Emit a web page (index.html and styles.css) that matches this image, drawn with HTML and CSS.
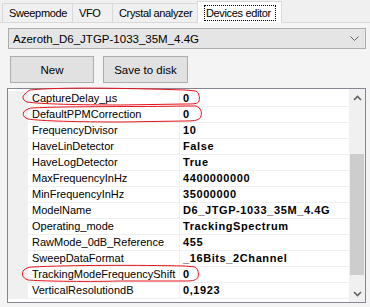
FILE: index.html
```html
<!DOCTYPE html>
<html>
<head>
<meta charset="utf-8">
<link rel="stylesheet" href="styles.css">
</head>
<body>
<div class="window">
  <div class="tabs">
    <div class="tab t1">Sweepmode</div>
    <div class="tab t2">VFO</div>
    <div class="tab t3">Crystal analyzer</div>
    <div class="tab active t4"><span class="focus">Devices editor</span></div>
  </div>
  <div class="page">
    <div class="combo">
      <span class="combo-text">Azeroth_D6_JTGP-1033_35M_4.4G</span>
      <svg class="combo-arrow" width="9" height="5" viewBox="0 0 9 5"><path d="M0.5 0.5 L4.5 4.5 L8.5 0.5" fill="none" stroke="#606060" stroke-width="1"/></svg>
    </div>
    <div class="buttons">
      <button class="btn b-new">New</button>
      <button class="btn b-save">Save to disk</button>
    </div>
    <div class="grid">
      <div class="rows">
        <div class="row"><div class="gutter"></div><div class="name">CaptureDelay_µs</div><div class="val">0</div></div>
        <div class="row"><div class="gutter"></div><div class="name">DefaultPPMCorrection</div><div class="val">0</div></div>
        <div class="row"><div class="gutter"></div><div class="name">FrequencyDivisor</div><div class="val">10</div></div>
        <div class="row"><div class="gutter"></div><div class="name">HaveLinDetector</div><div class="val">False</div></div>
        <div class="row"><div class="gutter"></div><div class="name">HaveLogDetector</div><div class="val">True</div></div>
        <div class="row"><div class="gutter"></div><div class="name">MaxFrequencyInHz</div><div class="val">4400000000</div></div>
        <div class="row"><div class="gutter"></div><div class="name">MinFrequencyInHz</div><div class="val">35000000</div></div>
        <div class="row"><div class="gutter"></div><div class="name">ModelName</div><div class="val">D6_JTGP-1033_35M_4.4G</div></div>
        <div class="row"><div class="gutter"></div><div class="name">Operating_mode</div><div class="val">TrackingSpectrum</div></div>
        <div class="row"><div class="gutter"></div><div class="name">RawMode_0dB_Reference</div><div class="val">455</div></div>
        <div class="row"><div class="gutter"></div><div class="name">SweepDataFormat</div><div class="val">_16Bits_2Channel</div></div>
        <div class="row"><div class="gutter"></div><div class="name">TrackingModeFrequencyShift</div><div class="val">0</div></div>
        <div class="row"><div class="gutter"></div><div class="name">VerticalResolutiondB</div><div class="val">0,1923</div></div>
      </div>
      <div class="scrollbar">
        <div class="sb-btn"><svg width="9" height="6" viewBox="0 0 9 6"><path d="M1 5 L4.5 1.5 L8 5" fill="none" stroke="#606060" stroke-width="1.6"/></svg></div>
        <div class="sb-track"><div class="sb-thumb"></div></div>
        <div class="sb-btn"><svg width="9" height="6" viewBox="0 0 9 6"><path d="M1 1 L4.5 4.5 L8 1" fill="none" stroke="#606060" stroke-width="1.6"/></svg></div>
      </div>
    </div>
  </div>
  <svg class="annot" width="370" height="307" viewBox="0 0 370 307">
    <path d="M30 90 C60 87 120 88 185 90 L196 91 C199 93 200 97 199 101 C198 104 194 104 185 104 L120 105 C80 105 40 104 27 102 C22 100 22 96 25 94 C27 92 28 91 30 90 Z" fill="none" stroke="#e3141c" stroke-width="1"/>
    <path d="M32 108 C70 106 140 107 185 106 L196 106 C201 108 202 112 201 116 C200 120 196 121 185 121 L120 122 C80 122 40 121 28 119 C22 117 22 112 26 110 C28 109 30 108 32 108 Z" fill="none" stroke="#e3141c" stroke-width="1"/>
    <path d="M32 267 C70 265 140 265 185 266 L195 267 C198 269 199 273 198 277 C197 280 193 281 185 281 L120 281 C80 282 40 281 28 280 C22 278 21 273 24 270 C26 268 29 267 32 267 Z" fill="none" stroke="#e3141c" stroke-width="1"/>
  </svg>
</div>
</body>
</html>
```
FILE: styles.css
```css
* { box-sizing: border-box; }
html, body { margin: 0; padding: 0; }
body {
  background: #f0f0f0;
  font-family: "Liberation Sans", Arial, sans-serif;
  font-size: 11px;
  color: #000;
  width: 370px;
  height: 307px;
  overflow: hidden;
}
.window { position: relative; width: 370px; height: 307px; }

.tabs {
  display: flex;
  align-items: flex-end;
  height: 23px;
  padding-left: 2px;
  border-bottom: 1px solid #d9d9d9;
}
.tab {
  height: 19px;
  border: 1px solid #d9d9d9;
  border-bottom: none;
  background: #f0f0f0;
  padding: 3px 0 0 6px;
  margin-right: -1px;
  white-space: nowrap;
  font-size: 11px;
  letter-spacing: -0.35px;
}
.t1 { width: 71px; }
.t2 { width: 41px; }
.t3 { width: 86px; }
.t4 { width: 85px; }
.tab.active {
  background: #fff;
  margin-bottom: -1px;
  height: 22px;
  padding: 4px 0 0 7px;
  position: relative;
}
.focus {
  display: inline-block;
  outline: 1px dotted #000;
  outline-offset: 0;
  padding: 0 4px 0 1px;
  line-height: 14px;
}

.page {
  background: #f4f4f4;
  height: 284px;
  padding-top: 5px;
}
.combo {
  margin-left: 8px;
  width: 358px;
  height: 21px;
  background: #e5e5e5;
  border: 1px solid #adadad;
  display: flex;
  align-items: center;
  justify-content: space-between;
  padding: 0 6px 0 4px;
  font-size: 11.5px;
}
.combo-arrow { display: block; }

.buttons {
  display: flex;
  gap: 9px;
  margin: 7px 0 0 10px;
  height: 27px;
}
.btn {
  font-family: inherit;
  font-size: 11.5px;
  color: #000;
  background: #e1e1e1;
  border: 1px solid #adadad;
  height: 27px;
  padding: 0;
  margin: 0;
}
.b-new { width: 84px; }
.b-save { width: 85px; }

.grid {
  margin: 5px 0 0 7px;
  width: 359px;
  height: 215px;
  border: 1px solid #828790;
  background: #fff;
  display: flex;
}
.rows {
  flex: 1;
  padding-top: 2px;
}
.row {
  display: grid;
  grid-template-columns: 20px 152px 1fr;
  height: 16px;
}
.gutter { background: #f0f0f0; }
.name, .val {
  border-bottom: 1px solid #f0f0f0;
  line-height: 15px;
  white-space: nowrap;
  overflow: hidden;
}
.name { padding-left: 4px; border-right: 1px solid #f0f0f0; }
.val { padding-left: 3px; font-weight: bold; letter-spacing: 0.6px; }

.scrollbar {
  width: 16px;
  background: #f0f0f0;
  display: flex;
  flex-direction: column;
}
.sb-btn {
  height: 17px;
  display: flex;
  align-items: center;
  justify-content: center;
}
.sb-track { flex: 1; padding-top: 48px; padding-bottom: 10px; display: flex; flex-direction: column; }
.sb-thumb { background: #cdcdcd; flex: 1; margin: 0 1px; }

.annot { position: absolute; left: 0; top: 0; pointer-events: none; }
```
